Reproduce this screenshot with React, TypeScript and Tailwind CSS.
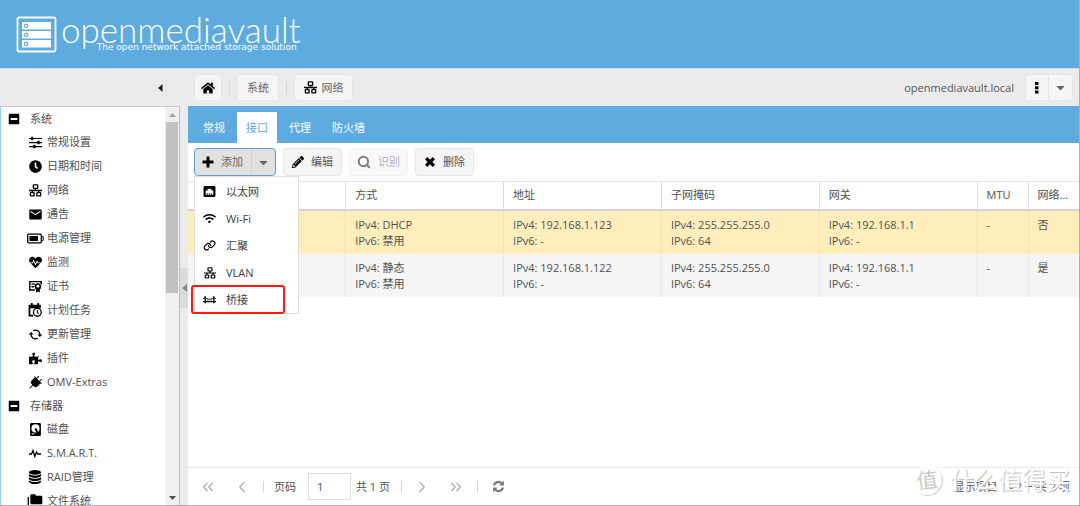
import type { ReactNode } from 'react'
import { FaCaretDown, FaClock, FaHeartbeat, FaHome, FaMinusSquare, FaPencilAlt, FaPuzzlePiece, FaWifi } from 'react-icons/fa'
import { MdAutorenew, MdEmail, MdFolderCopy } from 'react-icons/md'
import { PiLinkBold, PiPlugFill } from 'react-icons/pi'
import { ChevronLeft, ChevronRight, ChevronsLeft, ChevronsRight, Search } from 'lucide-react'

function Svg({ size = 13, children }: { size?: number; children: ReactNode }) {
  return (
    <svg width={size} height={size} viewBox="0 0 24 24" fill="currentColor" aria-hidden="true">
      {children}
    </svg>
  )
}

const SlidersIcon = () => (
  <Svg>
    <path d="M0 3.500h24v2.200H0zM0 11h24v2.200H0zM0 18.500h24v2.200H0z" />
    <rect x="4" y="1.500" width="4" height="6.500" rx="1" />
    <rect x="15.500" y="8.800" width="4" height="6.500" rx="1" />
    <rect x="8" y="16.200" width="4" height="6.500" rx="1" />
  </Svg>
)

const NetworkIcon = ({ size = 13 }: { size?: number }) => (
  <Svg size={size}>
    <g fill="none" stroke="currentColor" strokeWidth="2.4">
      <rect x="8" y="1.5" width="8" height="6.5" rx="1" />
      <rect x="2.5" y="16" width="7" height="6" rx="1" />
      <rect x="14.5" y="16" width="7" height="6" rx="1" />
      <path d="M12 8v4M0 12h24M6 12v4M18 12v4" />
    </g>
  </Svg>
)

const BatteryIcon = () => (
  <svg width="17" height="11" viewBox="0 0 17 11" aria-hidden="true">
    <rect x=".7" y="1.200" width="13.600" height="8.600" rx="1" fill="none" stroke="currentColor" strokeWidth="1.300" />
    <rect x="2.500" y="3" width="8.500" height="5" fill="currentColor" />
    <path d="M14.500 3.200l1.700.5v3.600l-1.700.5" fill="none" stroke="currentColor" />
  </svg>
)

const CertificateIcon = () => (
  <Svg>
    <path d="M11 18.500H1.500V3h21v5" fill="none" stroke="currentColor" strokeWidth="2.6" />
    <path d="M4.500 7.500H11M4.500 12.500H9" stroke="currentColor" strokeWidth="2.400" />
    <path d="M16.500 5l2 1.800 2.700-.3.200 2.700L23.500 11l-1.500 2.200.3 2.600-2.300.6V23l-3.500-2-3.500 2v-6.600l-2.300-.6.300-2.600L9.500 11l2.100-1.800.2-2.700 2.700.3z" />
    <circle cx="16.500" cy="11.500" r="2.600" fill="white" />
  </Svg>
)

const CalendarClockIcon = () => (
  <Svg size={14}>
    <path d="M5 0h3v3h8V0h3v3h3v6H4v11h5v3H1V3h4z" />
    <circle cx="16" cy="16" r="6.700" fill="white" stroke="currentColor" strokeWidth="2.200" />
    <path d="M16 12v4.500l3 1.700" fill="none" stroke="currentColor" strokeWidth="1.800" />
  </Svg>
)

const DiskIcon = () => (
  <Svg>
    <rect x="2" y="0" width="20" height="24" rx="2.500" />
    <circle cx="12" cy="10" r="7.500" fill="white" />
    <path d="M11 9l3 1 4 9-3 1-4-8z" />
    <path d="M5 20h5" stroke="white" strokeWidth="1.800" />
  </Svg>
)

const PulseIcon = () => (
  <svg width="12" height="9" viewBox="0 0 12 9" fill="none" stroke="currentColor" strokeWidth="1.300" aria-hidden="true">
    <path d="M0 5h2.500L4 1.500l1.800 6L7.500 3l1.300 2H12" />
  </svg>
)

const DatabaseIcon = () => (
  <Svg size={14}>
    <ellipse cx="12" cy="4" rx="10.500" ry="4" />
    <path d="M1.500 6.500c2 4 19 4 21 0V10c-2 4.700-19 4.700-21 0z" />
    <path d="M1.500 12c2 4 19 4 21 0v3.500c-2 4.700-19 4.700-21 0z" />
    <path d="M1.500 17.500c2 4 19 4 21 0V20c-2 5.300-19 5.300-21 0z" />
  </Svg>
)

const EthernetIcon = () => (
  <Svg>
    <rect x="1" y="2" width="22" height="20" rx="2.500" />
    <path d="M5 18v-8h3.500V7h7v3H19v8z" fill="white" />
    <path d="M8 18v-3M12 18v-3M16 18v-3" stroke="currentColor" strokeWidth="1.500" />
  </Svg>
)

const BridgeIcon = () => (
  <Svg>
    <path d="M4 6v13M20 6v13M0 16h24" stroke="currentColor" strokeWidth="2.400" />
    <path d="M0 11l4-3c4 4.500 12 4.500 16 0l4 3" fill="none" stroke="currentColor" strokeWidth="1.600" />
    <path d="M9 11v5M15 11v5" stroke="currentColor" />
  </Svg>
)

const PlusIcon = () => (
  <Svg size={12}>
    <path d="M9 1h6v8h8v6h-8v8H9v-8H1V9h8z" />
  </Svg>
)

const CrossIcon = () => (
  <Svg size={12}>
    <path d="M6.500 2L12 7.300 17.500 2 22 6.500 16.700 12l5.300 5.500-4.500 4.500L12 16.700 6.500 22 2 17.500 7.300 12 2 6.500z" />
  </Svg>
)

const RefreshIcon = () => (
  <Svg>
    <path d="M2 10a10 10 0 0 1 17-5.500L22 1.500V10h-8.500l2.700-2.700A6.500 6.500 0 0 0 5.700 10zM22 14a10 10 0 0 1-17 5.500L2 22.500V14h8.500l-2.700 2.700A6.500 6.500 0 0 0 18.300 14z" />
  </Svg>
)

const groups = [
  {
    title: '系统',
    items: [
      { label: '常规设置', icon: <SlidersIcon /> },
      { label: '日期和时间', icon: <FaClock size={13} /> },
      { label: '网络', icon: <NetworkIcon /> },
      { label: '通告', icon: <MdEmail size={15} /> },
      { label: '电源管理', icon: <BatteryIcon /> },
      { label: '监测', icon: <FaHeartbeat size={13} /> },
      { label: '证书', icon: <CertificateIcon /> },
      { label: '计划任务', icon: <CalendarClockIcon /> },
      { label: '更新管理', icon: <MdAutorenew size={15} className="rotate-90" /> },
      { label: '插件', icon: <FaPuzzlePiece size={13} /> },
      { label: 'OMV-Extras', icon: <PiPlugFill size={15} /> },
    ],
  },
  {
    title: '存储器',
    items: [
      { label: '磁盘', icon: <DiskIcon /> },
      { label: 'S.M.A.R.T.', icon: <PulseIcon /> },
      { label: 'RAID管理', icon: <DatabaseIcon /> },
      { label: '文件系统', icon: <MdFolderCopy size={16} /> },
    ],
  },
]

const menuItems = [
  { label: '以太网', icon: <EthernetIcon /> },
  { label: 'Wi-Fi', icon: <FaWifi size={13} /> },
  { label: '汇聚', icon: <PiLinkBold size={13} /> },
  { label: 'VLAN', icon: <NetworkIcon size={12} /> },
  { label: '桥接', icon: <BridgeIcon />, marked: true },
]

const columns = ['', '方式', '地址', '子网掩码', '网关', 'MTU', '网络...']

const rows = [
  [[], ['IPv4: DHCP', 'IPv6: 禁用'], ['IPv4: 192.168.1.123', 'IPv6: -'], ['IPv4: 255.255.255.0', 'IPv6: 64'], ['IPv4: 192.168.1.1', 'IPv6: -'], ['-'], ['否']],
  [[], ['IPv4: 静态', 'IPv6: 禁用'], ['IPv4: 192.168.1.122', 'IPv6: -'], ['IPv4: 255.255.255.0', 'IPv6: 64'], ['IPv4: 192.168.1.1', 'IPv6: -'], ['-'], ['是']],
]

function Header() {
  return (
    <header className="flex h-[69px] shrink-0 items-start gap-1 border-b border-[#cbdde9] bg-[#5dabdf] pl-4 pt-4 text-white">
      <svg width="41" height="37" viewBox="0 0 41 37" fill="none" aria-hidden="true">
        <rect x="1.500" y="1.500" width="38" height="34" rx="1.500" stroke="white" strokeWidth="1.800" />
        {[7, 16, 25].map((y) => (
          <g key={y}>
            <rect x="6" y={y - 1} width="29" height="7.500" fill="white" />
            <circle cx="10.200" cy={y + 2.800} r="1.700" stroke="#5dabdf" strokeWidth="1.200" />
          </g>
        ))}
      </svg>
      <div className="flex flex-col items-end">
        <h1 className="font-[Lato,sans-serif] text-[35px] font-light leading-[26px]">openmediavault</h1>
        <p className="pr-1 font-['DejaVu_Sans',sans-serif] text-[9px] leading-[10px]">The open network attached storage solution</p>
      </div>
    </header>
  )
}

function Separator({ className = '' }: { className?: string }) {
  return <span className={`h-3 w-px bg-[#d4d4d4] ${className}`} />
}

function Breadcrumb() {
  const crumb = 'flex h-[27px] items-center justify-center rounded-sm border border-[#e6e6e6] bg-[#f5f5f5] text-[#666]'
  return (
    <div className="flex h-[37px] shrink-0 items-center bg-[#ebebeb]">
      <div className="flex w-[188px] shrink-0 justify-end pr-6">
        <button aria-label="收起" className="text-[#222]">
          <svg width="7" height="8" viewBox="0 0 7 8" fill="currentColor">
            <path d="M5.500 0v8L1 4z" />
          </svg>
        </button>
      </div>
      <nav className="ml-[6px] flex items-center gap-[7px]">
        <button aria-label="主页" className={`${crumb} w-7`}>
          <FaHome size={14} className="text-black" />
        </button>
        <Separator />
        <button className={`${crumb} w-[42px]`}>系统</button>
        <Separator />
        <button className={`${crumb} w-[59px] gap-[5px]`}>
          <span className="text-black"><NetworkIcon /></span>
          网络
        </button>
      </nav>
      <span className="ml-auto text-[#555]">openmediavault.local</span>
      <div className="ml-[11px] mr-[6px] flex">
        <button aria-label="更多" className={`${crumb} w-6 rounded-r-none`}>
          <svg width="4" height="12" viewBox="0 0 4 12" fill="black">
            <path d="M0 0h3.500v3H0zM0 4.300h3.500v3H0zM0 8.600h3.500v3H0z" />
          </svg>
        </button>
        <button aria-label="展开" className={`${crumb} w-6 rounded-l-none border-l-0`}>
          <FaCaretDown size={13} />
        </button>
      </div>
    </div>
  )
}

function Sidebar() {
  return (
    <aside className="flex w-[180px] shrink-0 border border-b-0 border-[#9ccbea] border-t-[#c8c8c8] bg-white">
      <div className="flex-1 overflow-hidden">
        {groups.map((group) => (
          <section key={group.title}>
            <h2 className="flex h-[23px] items-center pl-[7px]">
              <span className="w-[22px] text-black"><FaMinusSquare size={12} /></span>
              {group.title}
            </h2>
            <ul>
              {group.items.map((item) => (
                <li key={item.label}>
                  <a href="#" className="flex h-6 items-center pl-[25px]">
                    <span className="flex w-[18px] shrink-0 items-center justify-center text-black">{item.icon}</span>
                    <span className="ml-[3px] whitespace-nowrap">{item.label}</span>
                  </a>
                </li>
              ))}
            </ul>
          </section>
        ))}
      </div>
      <div className="flex w-[14px] flex-col items-center bg-[#f0f0f0]">
        <div className="flex h-[15px] shrink-0 items-center">
          <svg width="7" height="4" viewBox="0 0 7 4" fill="#a3a3a3"><path d="M3.500 0L7 4H0z" /></svg>
        </div>
        <div className="h-[43%] w-3 bg-[#c1c1c1]" />
        <div className="mt-auto flex h-[15px] shrink-0 items-center">
          <svg width="7" height="4" viewBox="0 0 7 4" fill="#505050"><path d="M3.500 4L7 0H0z" /></svg>
        </div>
      </div>
    </aside>
  )
}

function Splitter() {
  return (
    <div className="flex w-2 shrink-0 items-center bg-[#ebebeb] pb-9">
      <button aria-label="收起侧栏" className="flex h-10 w-2 items-center justify-center bg-[#dcdcdc]">
        <svg width="5" height="8" viewBox="0 0 5 8" fill="#888"><path d="M5 0v8L0 4z" /></svg>
      </button>
    </div>
  )
}

function AddMenu() {
  return (
    <ul className="absolute -left-px top-[27px] z-10 w-[105px] border border-[#ddd] bg-white pt-px">
      {menuItems.map((item) => (
        <li key={item.label} className="relative">
          <button className="flex h-[27px] w-full items-center pl-2">
            <span className="flex w-[13px] justify-center text-black">{item.icon}</span>
            <span className="ml-[10px] text-[#404040]">{item.label}</span>
          </button>
          {item.marked && (
            <span className="absolute -left-1 -right-1 -top-px mr-[17px] block h-[29px] rounded-[3px] border-2 border-[#ff1a10]" />
          )}
        </li>
      ))}
    </ul>
  )
}

function Toolbar() {
  const button = 'flex h-7 items-center justify-center gap-[7px] rounded-sm border border-[#e6e6e6] bg-[#f5f5f5] text-[#555]'
  return (
    <div className="flex h-[38px] shrink-0 items-center gap-[7px] pl-[6px]">
      <div className="relative flex h-7 w-[82px] rounded-sm border border-[#5f9fd6] bg-[#e1e1e1] text-[#666]">
        <button className="flex flex-1 items-center gap-[7px] border-r border-[#d2d2d2] pl-[7px]">
          <span className="text-black"><PlusIcon /></span>
          添加
        </button>
        <button aria-label="添加菜单" className="flex w-[23px] items-center justify-center">
          <FaCaretDown size={13} />
        </button>
        <AddMenu />
      </div>
      <button className={`${button} w-[59px]`}>
        <FaPencilAlt size={12} className="text-black" />
        编辑
      </button>
      <button disabled className={`${button} w-[59px] opacity-50`}>
        <Search size={14} strokeWidth={3.5} className="text-black" />
        识别
      </button>
      <button className={`${button} w-[59px]`}>
        <span className="text-black"><CrossIcon /></span>
        删除
      </button>
    </div>
  )
}

function InterfaceTable() {
  return (
    <table className="w-full table-fixed border-collapse border-t border-[#e4e4e4] text-left">
      <colgroup>
        {columns.map((column, i) => (
          <col key={column} className={i > 4 ? 'w-[51px]' : ''} />
        ))}
      </colgroup>
      <thead>
        <tr className="h-[28px] border-b-2 border-[#d3d3d3]">
          {columns.map((column) => (
            <th key={column} className="whitespace-nowrap border-r border-[#dedede] pl-[9px] font-normal last:border-r-0">
              {column}
            </th>
          ))}
        </tr>
      </thead>
      <tbody>
        {rows.map((row, i) => (
          <tr key={i} className={i === 0 ? 'bg-[#ffeebc]' : 'bg-[#f5f5f5]'}>
            {row.map((cell, j) => (
              <td key={j} className="border-r border-black/5 pb-[5px] pl-[9px] pt-[6px] align-top leading-4 last:border-r-0">
                {cell.map((line) => (
                  <div key={line}>{line}</div>
                ))}
              </td>
            ))}
          </tr>
        ))}
      </tbody>
    </table>
  )
}

function Pager() {
  const arrow = 'flex w-5 items-center justify-center text-[#aaa]'
  return (
    <footer className="relative flex h-[38px] shrink-0 items-center border-t border-[#e8e8e8] pl-[10px] pr-[9px]">
      <button aria-label="首页" className={arrow}><ChevronsLeft size={18} strokeWidth={1.5} /></button>
      <button aria-label="上一页" className={`${arrow} ml-[14px]`}><ChevronLeft size={18} strokeWidth={1.5} /></button>
      <Separator className="ml-[11px]" />
      <label htmlFor="page" className="ml-[10px]">页码</label>
      <input id="page" defaultValue="1" className="ml-3 h-[27px] w-[43px] border border-[#ddd] pl-2" />
      <span className="ml-[5px]">共 1 页</span>
      <Separator className="ml-[11px]" />
      <button aria-label="下一页" className={`${arrow} ml-[10px]`}><ChevronRight size={18} strokeWidth={1.5} /></button>
      <button aria-label="末页" className={`${arrow} ml-[14px]`}><ChevronsRight size={18} strokeWidth={1.5} /></button>
      <Separator className="ml-[11px]" />
      <button aria-label="刷新" className="ml-[14px] text-[#777]"><RefreshIcon /></button>
      <span className="ml-auto">显示项目 1 - 2 一共 2 项</span>
      <div className="pointer-events-none absolute bottom-[10px] right-[9px] flex items-center gap-2 text-white">
        <span className="flex size-[30px] -rotate-6 items-center justify-center rounded-full bg-white text-[21px] text-[#c9c9c9] shadow-[1px_1px_1px_#ccc]">值</span>
        <span className="text-[24px] leading-[30px] [text-shadow:1px_1px_1px_#bbb]">什么值得买</span>
      </div>
    </footer>
  )
}

export default function App() {
  const tabs = ['常规', '接口', '代理', '防火墙']

  return (
    <div className="flex h-screen flex-col overflow-hidden border-b border-r border-[#b0b0b0] bg-white font-['Open_Sans','Noto_Sans_CJK_SC',sans-serif] text-[11px] leading-4 text-[#505050]">
      <Header />
      <Breadcrumb />
      <div className="flex min-h-0 flex-1">
        <Sidebar />
        <Splitter />
        <main className="flex min-w-0 flex-1 flex-col">
          <div className="flex h-[37px] shrink-0 items-end gap-[3px] bg-[#5dabdf] pl-[6px]">
            {tabs.map((tab) => (
              <button
                key={tab}
                className={`h-[31px] px-[9px] ${tab === '接口' ? 'bg-white text-[#5dabdf]' : 'text-white'}`}
              >
                {tab}
              </button>
            ))}
          </div>
          <Toolbar />
          <div className="min-h-0 flex-1 overflow-hidden">
            <InterfaceTable />
          </div>
          <Pager />
        </main>
      </div>
    </div>
  )
}
